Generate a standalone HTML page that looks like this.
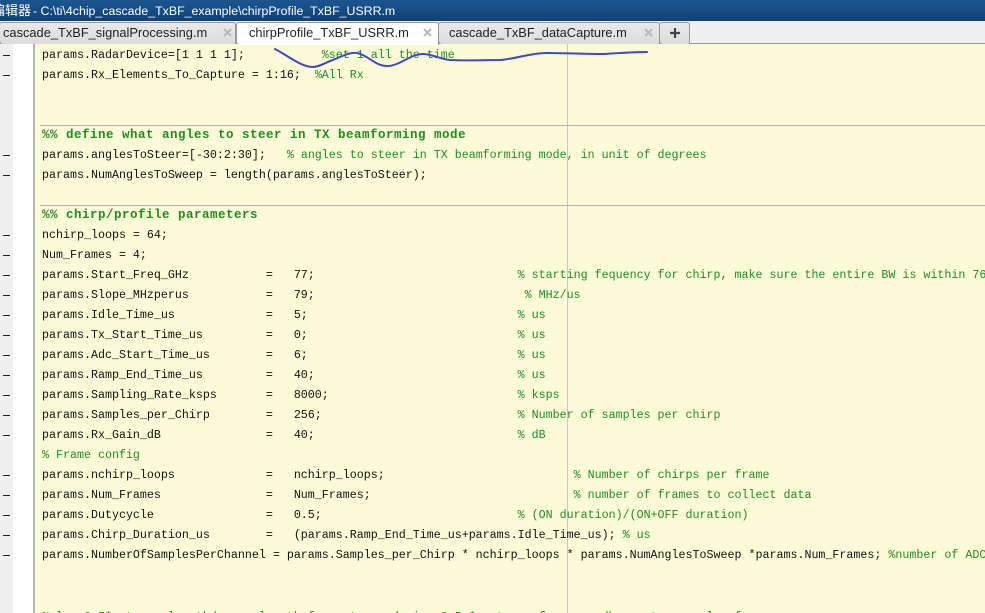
<!DOCTYPE html>
<html><head><meta charset="utf-8"><style>
html,body{margin:0;padding:0;width:985px;height:613px;overflow:hidden}
body{position:relative;background:#fcfbd8;font-family:"Liberation Sans","Noto Sans CJK SC",sans-serif}
div{position:absolute}
#title{left:0;top:0;width:985px;height:21px;background:linear-gradient(#1c568f,#0f4178);color:#fff;font-size:12.35px;line-height:22px;white-space:pre;overflow:hidden}
#tabbar{left:0;top:21px;width:985px;height:23px;background:#f0f0f0;border-bottom:1px solid #999;box-sizing:border-box}
.tab{top:22px;height:22px;box-sizing:border-box;background:linear-gradient(#e9e9e9,#dcdcdc);border:1px solid #9a9a9a;border-bottom:none;border-radius:3px 3px 0 4px;font-size:12.85px;line-height:20px;color:#222;white-space:pre}
#gut{left:0;top:44px;width:13px;height:569px;background:#f0f0f0}
#gw{left:13px;top:44px;width:20px;height:569px;background:#fff}
#gl{left:33px;top:44px;width:2px;height:569px;background:#b4b4b4}
#gw2{left:35px;top:44px;width:7px;height:569px;background:#fcfbd8}
#mar{left:567px;top:44px;width:1px;height:569px;background:#c8c8c8}
.rule{left:40px;width:945px;height:1px;background:#b0b0b0}
.d{left:3px;width:7px;height:1px;background:#222}
.l{left:42px;font:11.67px/20px "Liberation Mono",monospace;color:#111;white-space:pre;height:20px}
.c{color:#228b22}
.s{color:#228b22;font-weight:bold;font-size:12.5px;letter-spacing:.5px}
</style></head><body>
<div id="title"><span style="position:absolute;left:-8px;top:0;font-size:13px">编辑器</span><span style="position:absolute;left:33px;top:0">- C:\ti\4chip_cascade_TxBF_example\chirpProfile_TxBF_USRR.m</span></div>
<div id="gut"></div><div id="gw"></div><div id="gl"></div><div id="gw2"></div><div id="mar"></div>
<div class="rule" style="top:125px"></div><div class="rule" style="top:205px"></div>

<div class="l" style="top:45px">params.RadarDevice=[1 1 1 1];           <span class="c">%set 1 all the time</span></div>
<div class="l" style="top:65px">params.Rx_Elements_To_Capture = 1:16;  <span class="c">%All Rx</span></div>
<div class="l s" style="top:125px">%% define what angles to steer in TX beamforming mode</div>
<div class="l" style="top:145px">params.anglesToSteer=[-30:2:30];   <span class="c">% angles to steer in TX beamforming mode, in unit of degrees</span></div>
<div class="l" style="top:165px">params.NumAnglesToSweep = length(params.anglesToSteer);</div>
<div class="l s" style="top:205px">%% chirp/profile parameters</div>
<div class="l" style="top:225px">nchirp_loops = 64;</div>
<div class="l" style="top:245px">Num_Frames = 4;</div>
<div class="l" style="top:265px">params.Start_Freq_GHz           =   77;                             <span class="c">% starting fequency for chirp, make sure the entire BW is within 76</span></div>
<div class="l" style="top:285px">params.Slope_MHzperus           =   79;                              <span class="c">% MHz/us</span></div>
<div class="l" style="top:305px">params.Idle_Time_us             =   5;                              <span class="c">% us</span></div>
<div class="l" style="top:325px">params.Tx_Start_Time_us         =   0;                              <span class="c">% us</span></div>
<div class="l" style="top:345px">params.Adc_Start_Time_us        =   6;                              <span class="c">% us</span></div>
<div class="l" style="top:365px">params.Ramp_End_Time_us         =   40;                             <span class="c">% us</span></div>
<div class="l" style="top:385px">params.Sampling_Rate_ksps       =   8000;                           <span class="c">% ksps</span></div>
<div class="l" style="top:405px">params.Samples_per_Chirp        =   256;                            <span class="c">% Number of samples per chirp</span></div>
<div class="l" style="top:425px">params.Rx_Gain_dB               =   40;                             <span class="c">% dB</span></div>
<div class="l c" style="top:445px">% Frame config</div>
<div class="l" style="top:465px">params.nchirp_loops             =   nchirp_loops;                           <span class="c">% Number of chirps per frame</span></div>
<div class="l" style="top:485px">params.Num_Frames               =   Num_Frames;                             <span class="c">% number of frames to collect data</span></div>
<div class="l" style="top:505px">params.Dutycycle                =   0.5;                            <span class="c">% (ON duration)/(ON+OFF duration)</span></div>
<div class="l" style="top:525px">params.Chirp_Duration_us        =   (params.Ramp_End_Time_us+params.Idle_Time_us); <span class="c">% us</span></div>
<div class="l" style="top:545px">params.NumberOfSamplesPerChannel = params.Samples_per_Chirp * nchirp_loops * params.NumAnglesToSweep *params.Num_Frames; <span class="c">%number of ADC</span></div>
<div class="l c" style="top:607px;height:6px;overflow:hidden">% lam 0.5*antenna length/array length for antenna design 0.5 * antenna frequency/beam steer angle of</div>

<div class="d" style="top:55px"></div><div class="d" style="top:75px"></div>
<div class="d" style="top:155px"></div><div class="d" style="top:175px"></div>
<div class="d" style="top:235px"></div><div class="d" style="top:255px"></div><div class="d" style="top:275px"></div><div class="d" style="top:295px"></div><div class="d" style="top:315px"></div><div class="d" style="top:335px"></div><div class="d" style="top:355px"></div><div class="d" style="top:375px"></div><div class="d" style="top:395px"></div><div class="d" style="top:415px"></div><div class="d" style="top:435px"></div><div class="d" style="top:475px"></div><div class="d" style="top:495px"></div><div class="d" style="top:515px"></div><div class="d" style="top:535px"></div><div class="d" style="top:555px"></div>

<div id="tabbar"></div>
<div class="tab" style="left:-1px;width:237px;padding-left:3px">cascade_TxBF_signalProcessing.m</div>
<div class="tab" style="left:438px;width:222px;padding-left:10px">cascade_TxBF_dataCapture.m</div>
<div class="tab" style="left:236px;width:203px;background:#fff;height:23px;padding-left:12px;z-index:2">chirpProfile_TxBF_USRR.m</div>
<div class="tab" style="left:659px;width:31px;z-index:3"></div>

<svg style="position:absolute;left:0;top:0;z-index:5" width="985" height="613">
<g stroke="#b8b8b8" stroke-width="2" fill="none"><path d="M224 29 L231 36 M231 29 L224 36"/><path d="M424 29 L431 36 M431 29 L424 36"/><path d="M645 29 L652 36 M652 29 L645 36"/></g>
<path d="M670 33 H680 M675 28 V38" stroke="#444" stroke-width="2.2" fill="none"/>
<path d="M275 49 C290 57 300 66 312 67 C320 67 326 62 333 60 C342 56 350 52 357 53 C368 55 375 66 387 66 C400 66 410 54 423 54 C432 54 440 59 450 60 C468 61 482 60 500 60 C515 59 530 53 547 53 C565 53 585 54 603 54 C618 53 632 52 647 52" fill="none" stroke="#4149c6" stroke-width="2" stroke-linecap="round"/></svg>
</body></html>
